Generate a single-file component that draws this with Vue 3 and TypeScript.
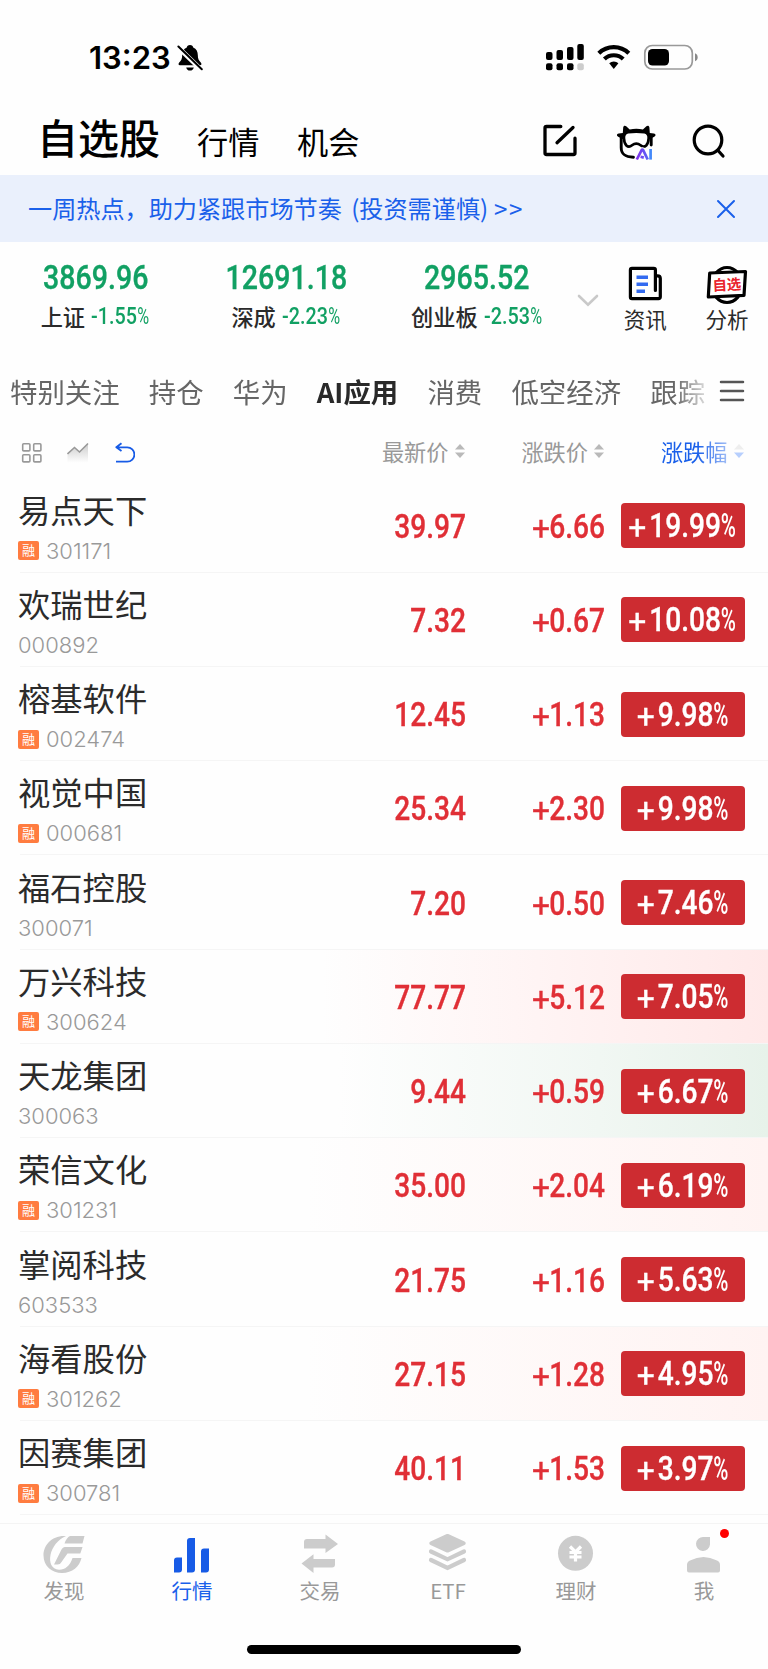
<script setup lang="ts">
interface Quote {
  name: string
  code: string
  margin: boolean
  price: string
  change: string
  percent: string
  flash?: string
}

const indices = [
  { name: '上证', value: '3869.96', percent: '-1.55' },
  { name: '深成', value: '12691.18', percent: '-2.23' },
  { name: '创业板', value: '2965.52', percent: '-2.53' },
]

const groups = ['特别关注', '持仓', '华为', 'AI应用', '消费', '低空经济', '跟踪']
const activeGroup = 'AI应用'

const columns = ['最新价', '涨跌价', '涨跌幅']

const quotes: Quote[] = [
  { name: '易点天下', code: '301171', margin: true, price: '39.97', change: '6.66', percent: '19.99' },
  { name: '欢瑞世纪', code: '000892', margin: false, price: '7.32', change: '0.67', percent: '10.08' },
  { name: '榕基软件', code: '002474', margin: true, price: '12.45', change: '1.13', percent: '9.98' },
  { name: '视觉中国', code: '000681', margin: true, price: '25.34', change: '2.30', percent: '9.98' },
  { name: '福石控股', code: '300071', margin: false, price: '7.20', change: '0.50', percent: '7.46' },
  { name: '万兴科技', code: '300624', margin: true, price: '77.77', change: '5.12', percent: '7.05', flash: 'up' },
  { name: '天龙集团', code: '300063', margin: false, price: '9.44', change: '0.59', percent: '6.67', flash: 'down' },
  { name: '荣信文化', code: '301231', margin: true, price: '35.00', change: '2.04', percent: '6.19', flash: 'soft' },
  { name: '掌阅科技', code: '603533', margin: false, price: '21.75', change: '1.16', percent: '5.63' },
  { name: '海看股份', code: '301262', margin: true, price: '27.15', change: '1.28', percent: '4.95', flash: 'soft' },
  { name: '因赛集团', code: '300781', margin: true, price: '40.11', change: '1.53', percent: '3.97' },
]

const navItems = ['发现', '行情', '交易', 'ETF', '理财', '我']
</script>

<template>
  <div class="app">
    <div class="status">
      <span class="time">13:23</span>
      <svg class="bell" width="26" height="28" viewBox="0 0 26 28">
        <path d="M13 1c-2 0-3 1.200-3.200 2.500C6.500 5 5.300 7.800 5.200 11c0 4-1 5.500-3 7.500-1 1.100-1 2.700.8 2.700h20c1.800 0 1.800-1.600.8-2.700-2-2-3-3.500-3-7.500 0-3.200-1.300-6-4.600-7.500C16 2.200 15 1 13 1zM9.200 23.400h7.600c-.4 2-1.800 3.100-3.800 3.100s-3.400-1.100-3.800-3.100z" />
        <path d="M1 3.200L25 26.500" stroke="#fff" stroke-width="4.600" />
        <path d="M1.400 2.500L24.800 25.300" stroke="#000" stroke-width="2" stroke-linecap="round" />
      </svg>
      <svg class="signals" width="158" height="30" viewBox="0 0 158 30">
        <rect x="1" y="9" width="6.500" height="8" rx="2" />
        <rect x="11.500" y="7" width="6.500" height="10" rx="2" />
        <rect x="22" y="4" width="6.500" height="13" rx="2" />
        <rect x="32.300" y="1" width="6.500" height="16" rx="2" />
        <rect x="1" y="20.300" width="6.500" height="7" rx="2" />
        <rect x="11.500" y="20.300" width="6.500" height="7" rx="2" />
        <rect x="22" y="20.300" width="6.500" height="7" rx="2" />
        <rect x="32.300" y="20.300" width="6.500" height="7" rx="2" fill="#ccc" />
        <g fill="none" stroke="#000" stroke-width="4.200">
          <path d="M53.800 10.300a21.500 21.500 0 0 1 30 0" />
          <path d="M59.400 16a13.600 13.600 0 0 1 18.800 0" />
        </g>
        <path d="M64.200 20.300a6.500 6.500 0 0 1 9.200 0L68.800 26z" />
        <rect x="99.800" y="2.500" width="47.500" height="23.500" rx="7.500" fill="none" stroke="#999" stroke-width="1.700" />
        <rect x="103" y="6" width="21" height="16.600" rx="4.500" />
        <path d="M150 10.300c3.600 1.200 3.600 6.800 0 8z" fill="#888" />
      </svg>
    </div>

    <header class="head">
      <h1>自选股</h1>
      <span class="head-tab first">行情</span>
      <span class="head-tab">机会</span>
      <div class="head-icons">
        <svg width="36" height="36" viewBox="0 0 36 36" fill="none" stroke="#000" stroke-width="3.300" stroke-linecap="round" stroke-linejoin="round">
          <path d="M18.800 3.500H4.500a1.500 1.500 0 0 0-1.500 1.500v25a1.500 1.500 0 0 0 1.500 1.500h27a1.500 1.500 0 0 0 1.500-1.500V15.200M31 4.500L15 19.700" />
        </svg>
        <svg class="mascot" width="42" height="42" viewBox="0 0 42 42">
          <defs>
            <linearGradient id="ai" x1="0" x2="1">
              <stop offset="0" stop-color="#8233ed" />
              <stop offset="1" stop-color="#5a62f6" />
            </linearGradient>
          </defs>
          <path d="M7.800 9L8.200 3.500c.2-1.800 1.800-2.300 3-1.200l3.500 3.200q6.600-1.300 13.200 0l3.500-3.200c1.200-1.100 2.800-.6 3 1.200L34.800 9l4 .6c2.300.4 2.100 2.400.5 3.200L35 15H7.500l-4.300-2.200c-1.600-.8-1.800-2.800.5-3.200z" />
          <path d="M13 8.200Q21.300 6.900 29.600 8.200 33.900 9.200 33.700 14 33.500 19 31.200 21.500 28.600 23.900 25.600 21.300 21.300 17.900 17 21.300 14 23.900 11.400 21.500 9.100 19 8.900 14 8.700 9.200 13 8.200z" fill="#fff" stroke="#000" stroke-width="2.700" />
          <path d="M6.200 13.500v10c0 7 4 9.400 12.300 9.700M36.200 13.500v7.500" fill="none" stroke="#000" stroke-width="2.900" stroke-linecap="round" />
          <path d="M21.800 35.500l5-9.200q.8-1.300 1.600 0l4.200 9.200" fill="none" stroke="#fefefe" stroke-width="5" />
          <path d="M21.800 35.500l4.700-9.200q.9-1.300 1.800 0l4.400 9.200M25.600 32.800l3.200.8" fill="none" stroke="url(#ai)" stroke-width="2.700" stroke-linejoin="round" />
          <path d="M35.600 25v10.600" stroke="#4489fa" stroke-width="2.700" />
        </svg>
        <svg width="36" height="36" viewBox="0 0 36 36" fill="none" stroke="#000" stroke-width="3.200" stroke-linecap="round">
          <circle cx="17" cy="17" r="13.800" />
          <path d="M27 27.500l5 5.500" />
        </svg>
      </div>
    </header>

    <div class="banner">
      <span>一周热点，助力紧跟市场节奏<i class="paren">(</i>投资需谨慎<i class="paren close">)</i><i class="more">&gt;&gt;</i></span>
      <svg width="20" height="20" viewBox="0 0 20 20" stroke="#1a60ea" stroke-width="2" stroke-linecap="round">
        <path d="M2 2l16 16M18 2L2 18" />
      </svg>
    </div>

    <section class="market">
      <div v-for="item in indices" :key="item.name" class="index">
        <div class="index-value num">{{ item.value }}</div>
        <div class="index-sub">
          <b>{{ item.name }}</b>
          <span class="index-pct num">{{ item.percent }}<i class="pct">%</i></span>
        </div>
      </div>
      <svg class="chevron" width="22" height="14" viewBox="0 0 22 14" fill="none" stroke="#c9c9c9" stroke-width="2.600" stroke-linecap="round">
        <path d="M2 2l9 8.700L20 2" />
      </svg>
      <div class="tool">
        <svg width="42" height="42" viewBox="0 0 42 42" fill="none" stroke="#000" stroke-width="3.200" stroke-linecap="round">
          <path d="M31.400 26.500V6q0-1.700-1.700-1.700H8Q6.400 4.300 6.400 6v27q0 1.600 1.600 1.600h26.500q1.800 0 1.800-1.800V14.500q0-2.700-2.700-2.700h-1.600" />
          <path d="M12.500 13.200h11.500M12.500 20.200h11.500M12.500 27.200h8.500" stroke="#326af0" stroke-width="3.500" stroke-linecap="butt" />
        </svg>
        <span>资讯</span>
      </div>
      <div class="tool">
        <svg width="42" height="42" viewBox="0 0 42 42">
          <ellipse cx="21" cy="21" rx="15" ry="17.500" fill="none" stroke="#000" stroke-width="3.200" />
          <path d="M3.700 9L39.500 7.500 38 31.400 2.300 33z" fill="#fff" stroke="#000" stroke-width="3.200" stroke-linejoin="round" />
          <text x="20.800" y="26" class="stamp" transform="rotate(-3 21 20)">自选</text>
        </svg>
        <span>分析</span>
      </div>
    </section>

    <nav class="groups">
      <div class="group-list">
        <span v-for="g in groups" :key="g" :class="{ active: g === activeGroup }">{{ g }}</span>
      </div>
      <svg width="26" height="24" viewBox="0 0 26 24" stroke="#555" stroke-width="2.500" stroke-linecap="round">
        <path d="M2 3h22M2 12h22M2 21h22" />
      </svg>
    </nav>

    <div class="table-head">
      <div class="modes">
        <svg width="22" height="22" viewBox="0 0 22 22" fill="none" stroke="#999" stroke-width="1.600">
          <rect x="1.700" y="1.700" width="7.200" height="7.200" rx="1" />
          <rect x="12.700" y="1.700" width="7.200" height="7.200" rx="1" />
          <rect x="1.700" y="12.700" width="7.200" height="7.200" rx="1" />
          <rect x="12.700" y="12.700" width="7.200" height="7.200" rx="1" />
        </svg>
        <svg width="22" height="22" viewBox="0 0 22 22">
          <defs>
            <linearGradient id="area" x1="0" y1="0" x2="0" y2="1">
              <stop offset="0" stop-color="#ccc" />
              <stop offset="1" stop-color="#fff" />
            </linearGradient>
          </defs>
          <path d="M.5 12l7-6.500 5 4.500L21 1.500V21H.5z" fill="url(#area)" />
          <path d="M.5 12l7-6.500 5 4.500L21 1.500" fill="none" stroke="#999" stroke-width="1.600" />
        </svg>
        <svg width="22" height="22" viewBox="0 0 22 22" fill="none" stroke="#175be6" stroke-width="1.800" stroke-linejoin="round">
          <path d="M8.500 1.200L3.300 5.300l5.200 3.700M3.500 5.300h10.700a7.200 7.200 0 0 1 0 14.400H3" />
        </svg>
      </div>
      <span v-for="(c, i) in columns" :key="c" class="column" :class="{ sorted: i === 2 }">
        {{ c }}
        <svg width="12" height="16" viewBox="0 0 12 16">
          <path d="M1 6.500L6 1l5 5.500z" :fill="i === 2 ? '#eee' : '#b9b9b9'" />
          <path d="M1 9.500L6 15l5-5.500z" :fill="i === 2 ? '#b7cffd' : '#b9b9b9'" />
        </svg>
      </span>
    </div>

    <main>
      <div v-for="q in quotes" :key="q.code" class="row" :class="q.flash">
        <div class="stock">
          <div class="name">{{ q.name }}</div>
          <div class="meta">
            <span v-if="q.margin" class="tag">融</span>
            <span class="code">{{ q.code }}</span>
          </div>
        </div>
        <div class="price num">{{ q.price }}</div>
        <div class="change num"><i class="sign">+</i>{{ q.change }}</div>
        <div class="badge">
          <span class="num"><i class="sign">+</i>{{ q.percent }}<i class="pct">%</i></span>
        </div>
      </div>
    </main>

    <footer>
      <div v-for="(n, i) in navItems" :key="n" class="nav-item" :class="{ on: i === 1 }">
        <svg v-if="i === 0" width="44" height="40" viewBox="0 0 44 40">
          <path d="M24 2C10 1 1.500 11 1.500 21.500S10 39 20 39c10.500 0 17.500-6.500 19.500-15h-9c-2.500 8-8 12-13.500 11.800C9.500 35.500 7 28 8.500 21 10 13 16 5.500 24 2z" />
          <path d="M28 2h14.500l-2 7.500H22.500Q24.500 3.500 28 2zM23 13h17.500l-2.200 6.500H25.500L19.500 28q-1.200 2.500-4 2.500H12l7-14q1.500-3.500 4-3.500z" />
        </svg>
        <svg v-else-if="i === 1" width="44" height="40" viewBox="0 0 44 40">
          <path d="M4 26.500a3 3 0 0 1 3-3h5v12a3 3 0 0 1-3 3H4zM17 7a3 3 0 0 1 3-3h5v31.500a3 3 0 0 1-3 3h-5zM31 17.500a3 3 0 0 1 3-3h5v21a3 3 0 0 1-3 3h-5z" />
        </svg>
        <svg v-else-if="i === 2" width="44" height="40" viewBox="0 0 44 40">
          <path d="M6 8q0-3 3-3h18.500V.5L40 10 27.500 19v-4.500H6zM37 30.500q0 3-3 3H15.500V39L3.500 29.500l12-9.300V25H37z" />
        </svg>
        <svg v-else-if="i === 3" width="44" height="40" viewBox="0 0 44 40">
          <path d="M20.200.2q1.300-.5 2.600 0L38.500 7.500q2.500 1.500 0 3.500L22.800 18.200q-1.300.6-2.600 0L4.500 11q-2.500-2 0-3.500z" />
          <path d="M5 17.500l16.500 7.800L38 17.500M5 26l16.500 8L38 26" fill="none" stroke="#ccc" stroke-width="4.200" stroke-linecap="round" />
        </svg>
        <svg v-else-if="i === 4" width="44" height="40" viewBox="0 0 44 40">
          <circle cx="21.500" cy="19.300" r="17.500" />
          <path d="M16 12.500l5.500 5.500 5.500-5.500M21.500 18v9.500M15.500 18.500h12M15.500 23h12" fill="none" stroke="#fff" stroke-width="3.200" />
        </svg>
        <svg v-else width="44" height="40" viewBox="0 0 44 40">
          <path d="M21.500 3H28v7.500A7 7 0 1 1 21.500 3zM5 31q0-3.500 3-4.500 13.500-7 27 0 3 1 3 4.500v5.500q0 2-2 2H7q-2 0-2-2z" />
        </svg>
        <i v-if="i === 5" class="dot"></i>
        <span>{{ n }}</span>
      </div>
    </footer>
    <div class="home-bar"></div>
  </div>
</template>

<style>
body {
  background: #fefefe;
}
</style>

<style scoped>
.app {
  width: 768px;
  height: 1669px;
  overflow: hidden;
  background: #fefefe;
  color: #2b2b2b;
  font-family: 'Noto Sans CJK SC', sans-serif;
  display: flex;
  flex-direction: column;
}
.app > * {
  flex-shrink: 0;
}
i {
  font-style: normal;
}
svg {
  display: block;
  flex-shrink: 0;
}
.num {
  display: inline-block;
  font-family: Roboto, sans-serif;
  font-weight: 500;
  white-space: nowrap;
  transform: scaleX(0.84);
  -webkit-text-stroke: 0.350px currentColor;
}
.sign {
  display: inline-block;
  width: 0.68em;
  font-weight: 400;
  transform: translate(-2px, 2px) scaleX(1.13);
  transform-origin: left;
}
.pct {
  display: inline-block;
  width: 0.52em;
  transform: scaleX(0.73);
  transform-origin: left;
  -webkit-text-stroke: 0;
}
.status {
  height: 115px;
  display: flex;
  align-items: center;
  padding-left: 89px;
  color: #000;
}
.time {
  width: 88px;
  font: 600 31px/40px Inter, sans-serif;
}
.signals {
  margin-left: 341.500px;
}
.head {
  height: 60px;
  display: flex;
  padding-left: 37px;
  color: #000;
  line-height: 43px;
}
h1 {
  margin: 0;
  width: 160px;
  font-size: 41px;
  font-weight: 500;
}
.head-tab {
  width: 100px;
  font-size: 31.200px;
  line-height: 51px;
}
.head-icons {
  display: flex;
  gap: 38px;
  margin: 7.500px 0 0 144.500px;
  align-items: flex-start;
}
.mascot {
  margin: 1px -4px 0 -1px;
}
.banner {
  height: 67px;
  display: flex;
  justify-content: space-between;
  align-items: center;
  padding: 0 32px 0 28px;
  background: #eaf0fc;
  color: #1a60ea;
  font-size: 24.150px;
}
.banner span {
  padding-bottom: 3px;
}
.paren {
  display: inline-block;
  width: 17.500px;
  text-align: right;
}
.close {
  width: 14px;
  text-align: left;
}
.more {
  letter-spacing: 1.500px;
}
.market {
  height: 121px;
  display: flex;
}
.index {
  width: 191px;
  display: flex;
  flex-direction: column;
  align-items: center;
}
.index-value {
  margin-top: 13px;
  font-size: 34px;
  line-height: 44px;
  color: #11a063;
}
.index-sub {
  display: flex;
  align-items: center;
  justify-content: center;
  height: 34px;
  gap: 6px;
}
.index-sub b {
  font-size: 22.200px;
  font-weight: 500;
}
.index-pct {
  width: 59px;
  font-size: 23.500px;
  color: #11a063;
  transform-origin: left;
  -webkit-text-stroke: 0;
}
.index-pct .pct {
  font-weight: 400;
  transform: scaleX(0.82);
}
.chevron {
  margin: 52px 0 0 5px;
}
.tool {
  width: 82px;
  display: flex;
  flex-direction: column;
  align-items: center;
  padding-top: 22px;
  font-size: 21.500px;
  line-height: 30px;
}
.chevron + .tool {
  margin-left: 5px;
}
.tool span {
  margin-top: -2.500px;
}
.stamp {
  font-size: 14.500px;
  font-weight: 700;
  fill: #e9232c;
  text-anchor: middle;
}
.groups {
  height: 56px;
  display: flex;
  align-items: center;
  padding-left: 10px;
  font-size: 27.450px;
  color: #666;
}
.group-list {
  width: 695px;
  display: flex;
  gap: 29.100px;
  white-space: nowrap;
  margin-right: 14px;
  overflow: hidden;
  -webkit-mask: linear-gradient(to right, #000 665px, transparent 705px);
}
.group-list .active {
  color: #292929;
  font-weight: 700;
}
.table-head {
  height: 59.400px;
  box-sizing: border-box;
  padding-top: 5px;
  display: flex;
  align-items: center;
  color: #999;
  font-size: 22.200px;
}
.modes {
  display: flex;
  gap: 24px;
  padding: 3px 0 0 21px;
  width: 305px;
  box-sizing: border-box;
  margin-right: 21px;
}
.column {
  width: 139.500px;
  display: flex;
  align-items: center;
  justify-content: flex-end;
  gap: 5px;
}
.sorted {
  color: #1a60ea;
  -webkit-mask: linear-gradient(to right, #000 92px, rgba(0, 0, 0, 0.300) 128px, #000 129px);
}
.row {
  --line: linear-gradient(#f5f5f5, #f5f5f5) 20px 100% / 748px 1px no-repeat;
  height: 94.260px;
  box-sizing: border-box;
  display: flex;
  align-items: center;
  padding-left: 18px;
  color: #e02f36;
  background: var(--line);
}
.row.up {
  background: var(--line), linear-gradient(to right, #fefefe 42%, #fff4f4 70%, #ffe9e9);
}
.row.down {
  background: var(--line), linear-gradient(to right, #fefefe 44%, #f1f7f3 78%, #e7f2ea);
}
.row.soft {
  background: var(--line), linear-gradient(to right, #fefefe 40%, #fff3f2);
}
.stock {
  width: 280px;
  padding-top: 5px;
}
.name {
  font-size: 32.300px;
  line-height: 42px;
  color: #2b2b2b;
}
.meta {
  display: flex;
  align-items: center;
  height: 36px;
  padding-top: 3px;
  gap: 7px;
  color: #999;
}
.tag {
  width: 21px;
  height: 19px;
  border-radius: 2px;
  background: #ff7c40;
  color: #fff;
  font-size: 13px;
  line-height: 18px;
  text-align: center;
}
.code {
  font: 300 22px/30px Inter, sans-serif;
}
.price,
.change {
  padding-top: 1px;
  font-size: 33.500px;
  transform-origin: right;
  text-align: right;
}
.price {
  width: 168px;
}
.change {
  width: 139px;
}
.badge {
  width: 124px;
  height: 45px;
  margin-left: 16px;
  border-radius: 4px;
  background: #cd2c31;
  color: #fff;
  display: flex;
  align-items: center;
  justify-content: center;
  font-size: 33.500px;
}
footer {
  margin-top: 8px;
  height: 121px;
  border-top: 1px solid #f4f4f4;
  display: flex;
  fill: #ccc;
  color: #999;
  font-size: 20.500px;
}
.nav-item {
  position: relative;
  width: 128px;
  display: flex;
  flex-direction: column;
  align-items: center;
  padding-top: 10px;
}
.nav-item span {
  line-height: 30px;
  margin-top: 1px;
}
.on {
  fill: #175be6;
  color: #1a60ea;
}
.dot {
  position: absolute;
  right: 39px;
  top: 5px;
  width: 9px;
  height: 9px;
  border-radius: 50%;
  background: #f00;
}
.home-bar {
  width: 274px;
  height: 9px;
  border-radius: 5px;
  background: #000;
  align-self: center;
}
</style>
